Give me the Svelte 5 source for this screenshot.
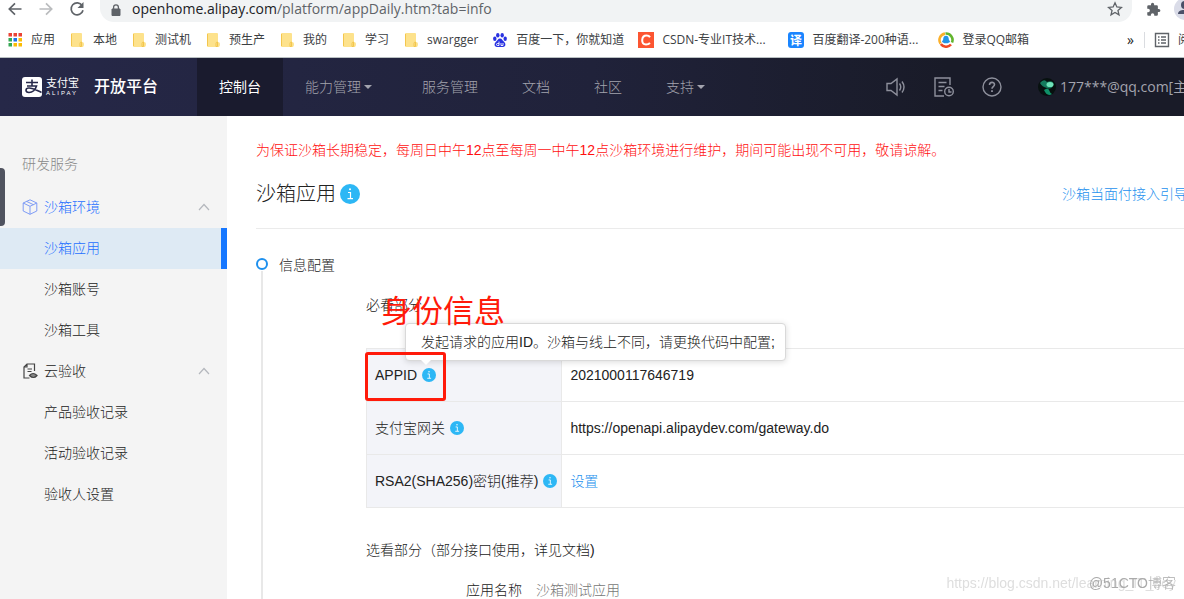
<script lang="ts">
  const bookmarks = [
    { icon: "apps", label: "应用" },
    { icon: "folder", label: "本地" },
    { icon: "folder", label: "测试机" },
    { icon: "folder", label: "预生产" },
    { icon: "folder", label: "我的" },
    { icon: "folder", label: "学习" },
    { icon: "folder", label: "swargger" },
    { icon: "baidu", label: "百度一下，你就知道" },
    { icon: "csdn", label: "CSDN-专业IT技术...", long: true },
    { icon: "fanyi", label: "百度翻译-200种语...", long: true },
    { icon: "qq", label: "登录QQ邮箱" },
  ];

  const appColors = ["#ea4335", "#ea4335", "#ea4335", "#34a853", "#1a73e8", "#fbbc04", "#34a853", "#fbbc04", "#fbbc04"];

  const navItems = [
    { label: "控制台" },
    { label: "能力管理", caret: true },
    { label: "服务管理" },
    { label: "文档" },
    { label: "社区" },
    { label: "支持", caret: true },
  ];

  const sandboxItems = ["沙箱应用", "沙箱账号", "沙箱工具"];
  const cloudItems = ["产品验收记录", "活动验收记录", "验收人设置"];

  let activeNav = $state("控制台");
  let activeItem = $state("沙箱应用");
  let sandboxOpen = $state(true);
  let cloudOpen = $state(true);
</script>

{#snippet info()}
  <svg class="info" viewBox="0 0 20 20" aria-hidden="true">
    <circle cx="10" cy="10" r="10" fill="#2db7f5" />
    <path d="M8 8.5h2.5v6M7.5 14.7h5.5" fill="none" stroke="#fff" stroke-width="1.2" />
    <circle cx="10" cy="5.3" r="1" fill="#fff" />
  </svg>
{/snippet}

{#snippet chevron(open: boolean)}
  <svg class="chevron" class:closed={!open} viewBox="0 0 12 8" fill="none" stroke="#b4b7bd" stroke-width="1.2">
    <path d="M1 7l5-5.5L11 7" />
  </svg>
{/snippet}

<header class="browser">
  <div class="toolbar">
    <button class="tool" aria-label="后退">
      <svg viewBox="0 0 16 16" fill="none" stroke="#5f6368" stroke-width="1.7"><path d="M14.5 8H2.5M8 2.3L2.3 8L8 13.7" /></svg>
    </button>
    <button class="tool" aria-label="前进">
      <svg viewBox="0 0 16 16" fill="none" stroke="#babcbe" stroke-width="1.7"><path d="M1.5 8h12M8 2.3L13.7 8L8 13.7" /></svg>
    </button>
    <button class="tool" aria-label="刷新">
      <svg viewBox="0 0 16 16" fill="none" stroke="#5f6368" stroke-width="1.7">
        <path d="M13.2 4.6A6 6 0 1 0 14 9.2" />
        <path d="M14.5 1v6h-6z" fill="#5f6368" stroke="none" />
      </svg>
    </button>
    <div class="omnibox">
      <svg class="lock" viewBox="0 0 10 12"><path d="M1 5h8v6.500H1z" fill="#5f6368" stroke="#5f6368" /><path d="M2.600 5V3.300a2.400 2.400 0 0 1 4.800 0V5" fill="none" stroke="#5f6368" stroke-width="1.300" /></svg>
      <div class="url">openhome.alipay.com<span>/platform/appDaily.htm?tab=info</span></div>
      <svg class="star" viewBox="0 0 16 16" fill="none" stroke="#5f6368" stroke-width="1.3"><path d="M8 1.800l1.850 4.200 4.550.4-3.450 3 1.050 4.500L8 11.500l-4 2.400 1.050-4.500-3.450-3 4.550-.4z" /></svg>
    </div>
    <svg class="puzzle" viewBox="0 0 24 24"><path fill="#5f6368" d="M20.500 11H19V7a2 2 0 0 0-2-2h-4V3.500a2.500 2.500 0 0 0-5 0V5H4a2 2 0 0 0-2 2v3.800h1.500a2.700 2.700 0 0 1 0 5.400H2V20a2 2 0 0 0 2 2h3.800v-1.500a2.700 2.700 0 0 1 5.400 0V22H17a2 2 0 0 0 2-2v-4h1.500a2.500 2.500 0 0 0 0-5z" /></svg>
    <svg class="profile" viewBox="0 0 10 22"><circle cx="11" cy="9" r="11" fill="#dadce8" /><circle cx="11" cy="5" r="4" fill="#4a5068" /><path d="M4 14c0-3 3-4 7-4v4z" fill="#4a5068" /></svg>
  </div>

  <nav class="bookmarks" aria-label="书签">
    {#each bookmarks as bookmark}
      <a href="#bookmark" class:long={bookmark.long}>
        <svg viewBox="0 0 16 16">
          {#if bookmark.icon === "apps"}
            {#each appColors as color, i}
              <rect x={1.5 + (i % 3) * 5} y={1 + Math.floor(i / 3) * 5} width="3.500" height="3.500" fill={color} />
            {/each}
          {:else if bookmark.icon === "folder"}
            <path d="M2 2q0-1 1-1h9q1 0 1 1v8q2 0 2 2t-1 3H3q-1 0-1-1z" fill="#fde28c" />
            <path d="M2.500 2v12M11 14.500v-3q0-1.500 1.500-1.500v4.500z" stroke="#f3c64e" fill="#fde28c" />
          {:else if bookmark.icon === "baidu"}
            <g fill="#2932e1">
              <ellipse cx="2.800" cy="6.800" rx="1.700" ry="2.200" />
              <ellipse cx="5.800" cy="3.200" rx="1.700" ry="2.300" />
              <ellipse cx="10.200" cy="3.200" rx="1.700" ry="2.300" />
              <ellipse cx="13.200" cy="6.800" rx="1.700" ry="2.200" />
              <path d="M8 6.500c2 0 2.500 2 4 3.300 2 1.700 2 5-1 5.200H5c-3-.2-3-3.500-1-5.200C5.500 8.500 6 6.500 8 6.500z" />
            </g>
            <path d="M7 9.500v4H5.500a1 1 0 0 1 0-2H7M9 11v2.500h2V11" fill="none" stroke="#fff" stroke-width=".9" />
          {:else if bookmark.icon === "csdn"}
            <rect width="16" height="16" fill="#fc5531" />
            <path d="M12 5.200Q11 3.500 8.500 3.500Q4.500 3.500 4.200 8Q4 12.500 8 12.500Q10.500 12.500 12 11" fill="none" stroke="#fff" stroke-width="2" />
          {:else if bookmark.icon === "fanyi"}
            <rect width="16" height="16" rx="3" fill="#1a85ff" />
            <text x="8" y="12.500" text-anchor="middle" font-size="12" font-weight="700" fill="#fff">译</text>
          {:else}
            <g fill="none" stroke-width="2.600">
              <path d="M2.500 11.500A6.500 6.500 0 0 1 7 1.600" stroke="#fbb02a" />
              <path d="M7.500 1.500A6.500 6.500 0 0 1 14 10.500" stroke="#62b52e" />
              <path d="M13 12.500A6.500 6.500 0 0 1 2.800 12" stroke="#ee4a26" />
            </g>
            <path d="M8 3.800c2 0 2.800 1.600 2.800 3.600l1.400 2.600-1.400.4c-.6 1.200-5 1.200-5.600 0L3.800 10l1.400-2.600c0-2 .8-3.600 2.800-3.600z" fill="#2395e8" />
          {/if}
        </svg>
        <span>{bookmark.label}</span>
      </a>
    {/each}
    <div class="bookmarks-end">
      <span class="more">»</span>
      <a class="reading" href="#reading">
        <svg viewBox="0 0 16 16" fill="none" stroke="#5f6368" stroke-width="1.400"><path d="M1.500 1.500h13v13h-13zM4 5h1.500M7 5h5M4 8h1.500M7 8h5M4 11h1.500M7 11h5" /></svg>
        <span>阅读清单</span>
      </a>
    </div>
  </nav>
</header>

<header class="platform">
  <a class="brand" href="#home">
    <svg class="brand-mark" viewBox="0 0 20 20">
      <rect width="20" height="20" rx="3" fill="#fff" />
      <path d="M4 5.500h12M10 2.500v6M5 9h9.500c-1 3.500-4 6.500-7.500 6.500-4 0-4-4.500 0-4.500 4 0 8 2.500 12.500 4.500" fill="none" stroke="#26284a" stroke-width="1.600" />
    </svg>
    <span class="brand-name"><b>支付宝</b><small>ALIPAY</small></span>
    <span class="brand-title">开放平台</span>
  </a>
  <nav class="menu">
    {#each navItems as item}
      <button class:active={activeNav === item.label} onclick={() => (activeNav = item.label)}>
        {item.label}{#if item.caret}<i class="caret"></i>{/if}
      </button>
    {/each}
  </nav>
  <div class="account">
    <button aria-label="公告">
      <svg viewBox="0 0 20 20" fill="none" stroke="#8e909c" stroke-width="1.400"><path d="M1 6.500h4L11 2v16l-6-4.500H1zM13.500 6.500q2.500 3.500 0 7M16 4.500q4 5.500 0 11" /></svg>
    </button>
    <button aria-label="日志">
      <svg viewBox="0 0 20 20" fill="none" stroke="#8e909c" stroke-width="1.400"><path d="M16 8V1H1v18h9M4.500 5.500h8M4.500 9.500h6M4.500 13.500h4" /><circle cx="15" cy="14.500" r="4.300" /><path d="M15 12v3h2.500" /></svg>
    </button>
    <button aria-label="帮助">
      <svg viewBox="0 0 20 20" fill="none" stroke="#8e909c" stroke-width="1.400"><circle cx="10" cy="10" r="9" /><path d="M7.500 8c0-3.500 5-3.300 5-.4 0 2-2.500 2-2.500 4.200" stroke-width="1.600" /><path d="M10 13.200v1.800" stroke-width="1.800" /></svg>
    </button>
    <a class="user" href="#user">
      <svg viewBox="0 0 18 18"><circle cx="9" cy="9" r="9" fill="#07110f" /><path d="M2 5Q6 0 9 4Q15 2 15.500 6Q14 12 9 10Q4 9 2 5z" fill="#147a5c" /><ellipse cx="12" cy="6.500" rx="3.500" ry="2.600" fill="#6fe3b8" /><path d="M6 12q4-3 5 0t3 4q-5 3-8-4z" fill="#0f9168" /></svg>
      <span>177***@qq.com[主账号]</span>
    </a>
  </div>
</header>

<div class="body">
  <aside>
    <div class="handle"></div>
    <h2>研发服务</h2>
    <button class="group current" onclick={() => (sandboxOpen = !sandboxOpen)}>
      <svg class="group-icon" viewBox="0 0 16 16" fill="none" stroke="#7f9cf5"><path d="M8 .800l6.800 3.200v8L8 15.300 1.200 12V4zM1.200 4L8 7.300 14.800 4M8 7.300v8M4.600 2.400l6.800 3.300" /></svg>
      沙箱环境
      {@render chevron(sandboxOpen)}
    </button>
    {#if sandboxOpen}
      {#each sandboxItems as item}
        <button class="item" class:active={activeItem === item} onclick={() => (activeItem = item)}>{item}</button>
      {/each}
    {/if}
    <button class="group" onclick={() => (cloudOpen = !cloudOpen)}>
      <svg class="group-icon" viewBox="0 0 16 16" fill="none" stroke="#444" stroke-width="1.200"><path d="M12.500 8V1H5L2 4v11h5.500M5 1v3H2M5.500 6H10M5.500 8.500h4" /><path d="M7.500 12.500q3.500-4 7.500 0q-3.500 4-7.500 0z" fill="#888" /></svg>
      云验收
      {@render chevron(cloudOpen)}
    </button>
    {#if cloudOpen}
      {#each cloudItems as item}
        <button class="item" class:active={activeItem === item} onclick={() => (activeItem = item)}>{item}</button>
      {/each}
    {/if}
  </aside>

  <main>
    <p class="notice">为保证沙箱长期稳定，每周日中午12点至每周一中午12点沙箱环境进行维护，期间可能出现不可用，敬请谅解。</p>
    <div class="title">
      <h1>沙箱应用</h1>
      {@render info()}
      <a class="guide" href="#guide">沙箱当面付接入引导</a>
    </div>

    <section class="step">
      <h3>信息配置</h3>
      <div class="config">
        <div class="required">
          <h4>必看部分</h4>
          <span class="remark">身份信息</span>
        </div>
        <table>
          <tbody>
            <tr>
              <th scope="row">
                <span class="field">APPID {@render info()}</span>
                <div class="tooltip" role="tooltip">发起请求的应用ID。沙箱与线上不同，请更换代码中配置;</div>
                <div class="frame"></div>
              </th>
              <td>2021000117646719</td>
            </tr>
            <tr>
              <th scope="row"><span class="field">支付宝网关 {@render info()}</span></th>
              <td>https://openapi.alipaydev.com/gateway.do</td>
            </tr>
            <tr>
              <th scope="row"><span class="field">RSA2(SHA256)密钥(推荐) {@render info()}</span></th>
              <td><a href="#key">设置</a></td>
            </tr>
          </tbody>
        </table>
        <h4 class="optional">选看部分（部分接口使用，详见文档)</h4>
        <dl>
          <dt>应用名称</dt>
          <dd>沙箱测试应用</dd>
        </dl>
      </div>
    </section>
  </main>
</div>

<div class="watermark csdn">https://blog.csdn.net/learning_IT_boy</div>
<div class="watermark cto">@51CTO博客</div>

<style>
  :global(body) {
    overflow: hidden;
    background: #fff;
    color: #222;
    font: 300 14px/20px "Liberation Sans", "Noto Sans CJK SC", sans-serif;
  }
  :global(#app) {
    display: flex;
    flex-direction: column;
    min-height: 100vh;
  }
  button {
    padding: 0;
    border: 0;
    background: none;
    color: inherit;
    font: inherit;
    cursor: pointer;
  }
  a {
    color: #2490ee;
    text-decoration: none;
  }
  svg {
    display: block;
    flex: none;
  }
  h1, h2, h3, h4, p, dl, dd {
    margin: 0;
    font-weight: inherit;
  }

  .browser {
    border-bottom: 1px solid #b9c0c2;
    font-family: "Open Sans", "Noto Sans CJK SC", sans-serif;
    font-weight: 400;
  }
  .toolbar {
    display: flex;
    align-items: center;
    height: 22px;
    padding-left: 7px;
  }
  .tool {
    width: 16px;
    height: 16px;
    margin: 0 15px 4px 0;
  }
  .omnibox {
    display: flex;
    flex: 1;
    align-items: center;
    height: 22px;
    padding: 0 9px 0 11px;
    border-radius: 0 0 14px 14px;
    background: #f1f3f4;
  }
  .lock {
    width: 10px;
    height: 12px;
    margin: 0 11px 3px 0;
  }
  .url {
    flex: 1;
    padding-bottom: 4px;
    color: #202124;
  }
  .url span {
    color: #5f6368;
  }
  .star {
    width: 16px;
    height: 16px;
    margin-bottom: 4px;
  }
  .puzzle {
    width: 15px;
    height: 15px;
    margin: 0 13px 4px 14px;
  }
  .profile {
    width: 10px;
    height: 22px;
  }
  .bookmarks {
    display: flex;
    align-items: center;
    gap: 14px;
    height: 35px;
    padding-left: 7px;
    font-size: 12px;
  }
  .bookmarks a {
    display: flex;
    align-items: center;
    gap: 8px;
    color: #3c4043;
    white-space: nowrap;
  }
  .bookmarks .long {
    width: 136px;
  }
  .bookmarks a svg {
    width: 16px;
    height: 16px;
  }
  .bookmarks-end {
    display: flex;
    align-items: center;
    margin-left: auto;
  }
  .more {
    padding-right: 10px;
    border-right: 1px solid #dadce0;
    font-size: 14px;
    line-height: 16px;
  }
  .bookmarks .reading {
    width: 30px;
    margin-left: 9px;
    overflow: hidden;
  }

  .platform {
    display: flex;
    height: 58px;
    background: linear-gradient(90deg, #262848, #20223a 50%, #191b28 80%);
    color: #a3a4ae;
  }
  .brand {
    display: flex;
    align-items: center;
    width: 175px;
    padding-left: 22px;
    color: #fff;
  }
  .brand-mark {
    width: 20px;
    height: 20px;
  }
  .brand-name {
    display: flex;
    flex-direction: column;
    width: 34px;
    margin: 0 14px 0 4px;
  }
  .brand-name b {
    font-size: 11px;
    line-height: 13px;
    white-space: nowrap;
  }
  .brand-name small {
    font-size: 6px;
    line-height: 7px;
    letter-spacing: 2px;
  }
  .brand-title {
    font-size: 16px;
    font-weight: 500;
  }
  .menu {
    display: flex;
  }
  .menu button {
    display: flex;
    align-items: center;
    padding: 0 22px;
    white-space: nowrap;
  }
  .menu .active {
    background: #1a1b2e;
    color: #fff;
    font-weight: 400;
  }
  .caret {
    margin: 0 6px 0 3px;
    border: 4px solid transparent;
    border-top-color: currentColor;
    border-bottom: 0;
  }
  .account {
    display: flex;
    align-items: center;
    gap: 28px;
    margin-left: auto;
  }
  .account button {
    width: 20px;
    height: 20px;
  }
  .user {
    display: flex;
    align-items: center;
    gap: 4px;
    width: 146px;
    margin-left: 8px;
    overflow: hidden;
    color: #a3a4ae;
    font-family: "Open Sans", "Noto Sans CJK SC", sans-serif;
    font-weight: 400;
    white-space: nowrap;
  }
  .user svg {
    width: 18px;
    height: 18px;
  }

  .body {
    display: flex;
    flex: 1;
  }
  aside {
    position: relative;
    flex: none;
    width: 227px;
    background: #f4f4f4;
  }
  .handle {
    position: absolute;
    top: 52px;
    left: 0;
    width: 5px;
    height: 58px;
    border-radius: 0 4px 4px 0;
    background: #50535f;
  }
  aside h2 {
    padding: 38px 22px 13px;
    color: #888;
    font-size: 14px;
  }
  .group, .item {
    display: flex;
    align-items: center;
    width: 100%;
    height: 41px;
    padding-bottom: 1px;
  }
  .group {
    gap: 6px;
    padding-left: 22px;
    padding-right: 17px;
  }
  .group-icon {
    width: 16px;
    height: 16px;
  }
  .chevron {
    width: 12px;
    height: 8px;
    margin-left: auto;
  }
  .chevron.closed {
    transform: rotate(180deg);
  }
  .item {
    padding-left: 44px;
  }
  .current, .item.active {
    color: #1f6fff;
  }
  .item.active {
    border-right: 6px solid #1677ff;
    background: #deeaf4;
  }

  main {
    flex: 1;
    min-width: 0;
    display: flex;
    flex-direction: column;
    padding: 24px 0 0 29px;
  }
  .notice {
    color: #ff1010;
    white-space: nowrap;
  }
  .title {
    display: flex;
    align-items: center;
    gap: 4px;
    height: 68px;
    border-bottom: 1px solid #ebebeb;
  }
  .title h1 {
    font-size: 20px;
    line-height: 28px;
  }
  .title .info {
    width: 20px;
    height: 20px;
  }
  .guide {
    width: 122px;
    margin-left: auto;
    overflow: hidden;
    white-space: nowrap;
  }
  .step {
    position: relative;
    flex: 1;
    padding: 26px 0 0 23px;
  }
  .step::before {
    position: absolute;
    top: 42px;
    bottom: 0;
    left: 5px;
    width: 2px;
    background: #e8e8e8;
    content: "";
  }
  .step::after {
    position: absolute;
    top: 29px;
    left: 0;
    width: 8px;
    height: 8px;
    border: 2px solid #1e90ee;
    border-radius: 50%;
    content: "";
  }
  .step h3, .step h4 {
    font-size: 14px;
  }
  .config {
    padding: 20px 0 0 87px;
  }
  .required {
    position: relative;
    height: 53px;
  }
  .remark {
    position: absolute;
    top: -3px;
    left: 15px;
    z-index: 2;
    color: #ff1a0a;
    font-size: 31px;
    font-weight: 400;
    line-height: 40px;
  }
  table {
    width: 100%;
    border-collapse: collapse;
  }
  th, td {
    height: 52px;
    padding: 0 8px;
    border: 1px solid #e9e9e9;
    font-weight: inherit;
    text-align: left;
  }
  td {
    border-right: 0;
  }
  th {
    position: relative;
    width: 178px;
    padding-right: 4px;
    background: #f3f4f9;
  }
  .field {
    display: flex;
    align-items: center;
    gap: 5px;
    white-space: nowrap;
  }
  .field .info {
    width: 14px;
    height: 14px;
  }
  .tooltip {
    position: absolute;
    top: -26px;
    left: 38px;
    z-index: 1;
    padding: 8px 10px 8px 15px;
    border: 1px solid #d9d9d9;
    border-radius: 4px;
    background: #fff;
    box-shadow: 0 1px 6px rgba(0, 0, 0, 0.15);
    white-space: nowrap;
  }
  .tooltip::after {
    position: absolute;
    top: 100%;
    left: 15px;
    border: 5px solid transparent;
    border-top-color: #fff;
    border-bottom: 0;
    content: "";
  }
  .frame {
    position: absolute;
    top: 3px;
    left: -2px;
    z-index: 2;
    width: 75px;
    height: 43px;
    border: 3px solid #ff1a0a;
    border-radius: 3px;
    pointer-events: none;
  }
  .optional {
    padding: 32px 0 20px;
  }
  dl {
    display: flex;
    gap: 14px;
    padding-left: 100px;
  }
  dd {
    color: #777;
  }

  .watermark {
    position: fixed;
    right: 8px;
    bottom: 6px;
    pointer-events: none;
    white-space: nowrap;
  }
  .csdn {
    color: #dedede;
  }
  .cto {
    color: #aaa;
  }
</style>
